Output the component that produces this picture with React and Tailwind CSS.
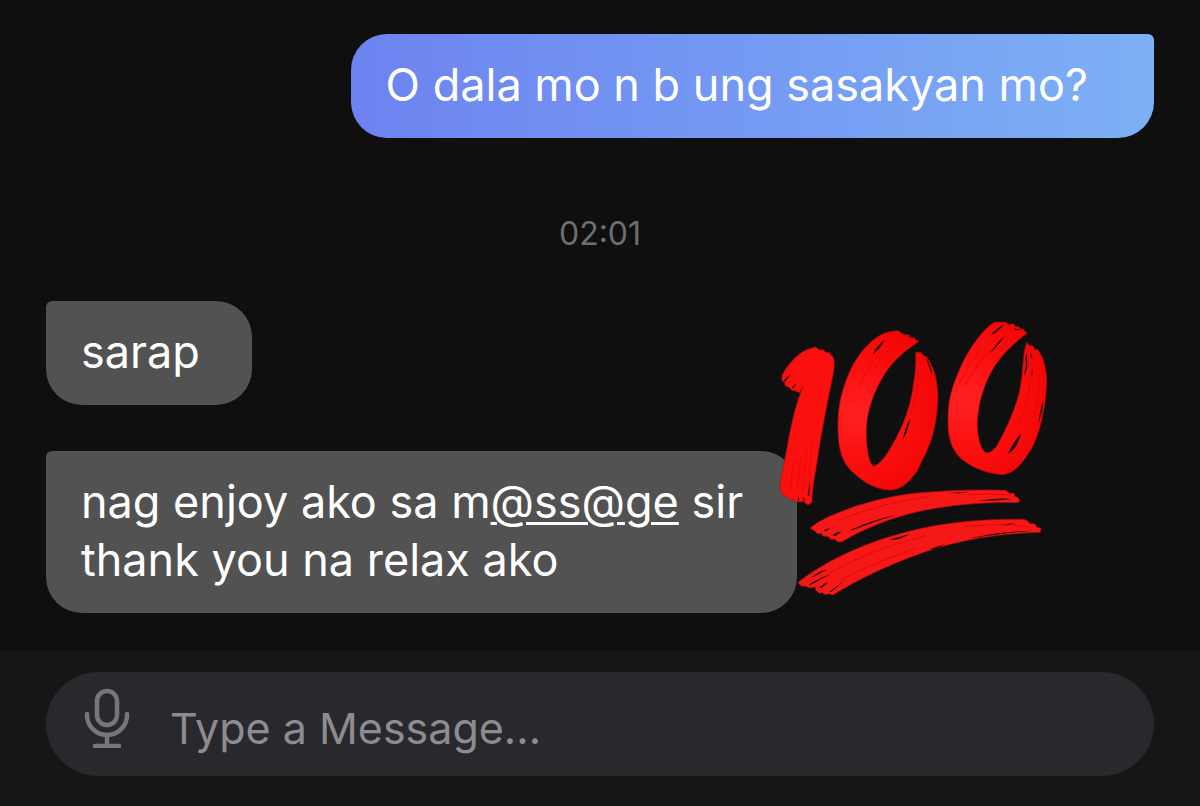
import React, { useState } from "react";

const messages = [
  { id: 1, from: "them", lines: [[{ text: "sarap" }]] },
  {
    id: 2,
    from: "them",
    sticker: true,
    lines: [
      [
        { text: "nag enjoy ako sa m" },
        { text: "@ss@ge", link: true },
        { text: " sir" },
      ],
      [{ text: "thank you na relax ako" }],
    ],
  },
];

const MicIcon = () => (
  <svg
    viewBox="0 0 46 60"
    fill="none"
    stroke="currentColor"
    strokeWidth="4.5"
    strokeLinecap="round"
    className="w-[46px] h-[60px]"
  >
    <rect x="13" y="3" width="20" height="34" rx="10" />
    <path d="M3 26v1a20 20 0 0 0 40 0v-1" />
    <path d="M23 47v11M11 58h24" />
  </svg>
);

// Brushed red "hundred points" sticker
const HundredSticker = () => (
  <svg
    viewBox="60 60 810 831"
    role="img"
    aria-label="Hundred points"
    className="absolute bottom-4 -right-[252px] w-[270px] h-[277px]"
  >
    <defs>
      <radialGradient id="zeroOne" gradientUnits="userSpaceOnUse" cx="290" cy="340" r="270">
        <stop offset="0" stopColor="#ff2222" />
        <stop offset="0.5" stopColor="#fb1010" />
        <stop offset="1" stopColor="#f30606" />
      </radialGradient>
      <radialGradient id="zeroTwo" gradientUnits="userSpaceOnUse" cx="615" cy="300" r="270">
        <stop offset="0" stopColor="#ff2222" />
        <stop offset="0.5" stopColor="#fb1010" />
        <stop offset="1" stopColor="#f30606" />
      </radialGradient>
    </defs>

    <g stroke="#a80d0d" strokeWidth="2" strokeLinejoin="round">
      <path
        fill="#fb1010"
        d="M70 225C85 195 120 155 150 147L170 141L182 150L192 149L201 157L209 157L220 168C228 178 227 200 222 225C205 310 188 390 175 480L162 560L158 608L146 615L134 604L125 606L112 605L103 598L95 599L80 590L65 577L63 552C68 520 78 475 85 440C95 380 108 320 132 258L122 278L108 272L97 270L91 262L78 257L77 248L68 240Z"
      />
      <path
        fill="url(#zeroOne)"
        d="M480 122L471 121L466 113L458 113L448 104L438 105L425 98L420 93L410 92L385 97C345 108 300 155 272 215C245 275 235 330 237 390C238 450 250 490 285 520C315 548 350 568 390 570C425 570 450 548 475 512L490 480L505 452C525 405 537 340 537 285C535 240 525 205 510 182L503 170L495 168L485 157L470 157C472 200 466 250 455 300C440 365 410 420 385 460C370 482 355 498 342 498C330 490 321 440 322 390C324 330 345 275 375 225C400 185 440 150 468 133Z"
      />
      <path
        fill="url(#zeroTwo)"
        d="M805 97L796 96L797 90L785 87L780 80L770 80L763 71L750 74L741 67L708 66C680 80 640 130 610 190C580 255 565 300 567 370C568 420 580 450 605 475C640 505 690 522 730 524C765 522 790 490 815 450C845 400 862 310 863 240C862 200 850 165 835 148L828 149L822 138L812 137L803 127L797 150C790 190 792 230 780 280C765 340 735 400 712 440C700 455 688 460 680 458C665 450 655 410 655 370C657 310 675 255 700 210C725 165 770 125 800 103Z"
      />
      <path
        fill="#f61717"
        d="M153 685L175 668C250 625 380 585 500 577C580 570 660 568 740 571L752 580L765 580L767 589L777 593L783 603L775 608C650 605 520 620 420 650C350 672 290 700 250 725L236 726L228 718L215 718L208 710L192 708L186 700L176 702L165 691Z"
      />
      <path
        fill="#f61717"
        d="M117 848C180 795 290 740 400 708C520 670 660 655 795 658L806 663L813 671L828 672L834 682L846 685L844 697C720 700 600 720 500 755C400 790 300 835 222 885L208 881L200 884L190 878L180 880L168 867L170 861L152 864L138 858L128 859Z"
      />
    </g>

    {/* dry brush gaps */}
    <g fill="#2a0a0a">
      <path d="M74 242Q86 229 96 223Q88 233 77 246Z" />
      <path d="M98 263Q106 254 114 248Q108 256 101 266Z" />
      <path d="M146 585L153 540L151 588Z" />
      <path d="M119 582L121 602L117 601ZM134 588L137 603L133 601Z" />
      <path d="M340 164Q352 138 377 121L360 147Z" />
      <path d="M450 108L464 117L447 109Z" />
      <path d="M500 172Q518 200 520 226L510 201Z" />
      <path d="M431 419Q438 383 454 354Q446 392 438 407Z" />
      <path d="M503 455L516 422L508 452Z" />
      <path d="M694 106Q713 84 738 72L714 96Z" />
      <path d="M690 163Q710 132 738 106Q720 135 690 163Z" />
      <path d="M766 85L786 91L768 90Z" />
      <path d="M799 170L804 160L805 200L797 228L797 215L801 194Z" />
      <path d="M815 155L820 178L814 168ZM820 204L820 224L815 232Z" />
      <path d="M852 300L850 335L838 370Q843 328 852 300Z" />
      <path d="M745 463Q765 424 786 400Q775 448 745 463Z" />
      <path d="M274 690Q340 660 410 645Q345 665 282 690Z" />
      <path d="M194 691Q206 686 216 684L200 694Z" />
      <path d="M220 705Q236 696 248 693L230 709Z" />
      <path d="M568 579L630 575L602 580ZM660 603Q715 593 760 597L720 601Z" />
      <path d="M158 831Q178 815 206 808Q177 824 162 832Z" />
      <path d="M150 853Q185 832 216 822Q183 838 154 856Z" />
      <path d="M180 862Q192 852 208 845L188 865ZM210 877L258 839L220 874Z" />
      <path d="M390 719L455 701L420 718ZM720 674L770 669L745 676Z" />
      <path d="M640 713Q740 692 825 692Q742 697 640 715ZM510 748L560 732L530 747Z" />
    </g>

    {/* darker bristle streaks */}
    <g fill="none" stroke="#e40909" strokeWidth="3" strokeLinecap="round">
      <path d="M105 480L93 570M125 470L116 560M142 450L132 575M160 430L151 520" />
      <path d="M365 160Q320 215 298 260M410 125Q370 165 350 205M478 210Q478 275 455 340" />
      <path d="M690 150Q640 210 620 255M670 140Q625 200 602 250M815 225Q812 300 780 370M840 220Q845 290 825 350" />
      <path d="M240 660Q380 605 510 590M630 585Q690 578 755 585" />
      <path d="M210 820Q340 745 500 708M245 840Q350 785 470 745M620 680Q720 668 810 680" />
    </g>
  </svg>
);

const Bubble = ({ message }) => (
  <div className="relative self-start max-w-[751px] rounded-[36px] rounded-tl-[6px] bg-[#525252] pl-[35px] pr-[52px] pt-[22px] pb-6">
    {message.lines.map((line, i) => (
      <p key={i}>
        {line.map((part, j) =>
          part.link ? (
            <a
              key={j}
              href="#"
              className="underline decoration-[3px] underline-offset-4"
            >
              {part.text}
            </a>
          ) : (
            <React.Fragment key={j}>{part.text}</React.Fragment>
          ),
        )}
      </p>
    ))}
    {message.sticker && (
      <>
        {/* keeps the bubble wide enough for the sticker to hang on its edge */}
        <div className="w-[664px] max-w-full" />
        <HundredSticker />
      </>
    )}
  </div>
);

const App = () => {
  const [draft, setDraft] = useState("");

  return (
    <div className="min-h-screen flex flex-col overflow-hidden bg-[#0f0f0f] font-[Inter,sans-serif] text-[45px] leading-[58px] text-white">
      {/* Conversation */}
      <main className="flex-1 flex flex-col px-[46px] pt-[34px] pb-[38px]">
        <div className="self-end rounded-[36px] rounded-tr-[6px] bg-linear-to-r from-[#6d83f0] to-[#7db0f5] pl-[35px] pr-[66px] pt-[22px] pb-6">
          <p>O dala mo n b ung sasakyan mo?</p>
        </div>

        <time className="self-center mt-[76px] mb-[47px] text-[32px] leading-10 text-[#6e6e6e]">
          02:01
        </time>

        <div className="flex flex-col gap-[46px]">
          {messages.map((message) => (
            <Bubble key={message.id} message={message} />
          ))}
        </div>
      </main>

      {/* Composer */}
      <footer className="bg-[#161616] px-[46px] pt-[21px] pb-[30px]">
        <form
          onSubmit={(e) => e.preventDefault()}
          className="flex items-center h-[104px] rounded-full bg-[#29282d] pl-[38px] pr-10"
        >
          <button
            type="button"
            aria-label="Record voice message"
            className="mb-3 text-[#77767a]"
          >
            <MicIcon />
          </button>
          <input
            type="text"
            aria-label="Message"
            value={draft}
            onChange={(e) => setDraft(e.target.value)}
            placeholder="Type a Message..."
            className="flex-1 min-w-0 ml-10 pt-2 text-[43px] bg-transparent outline-none placeholder:text-[#8d8c91]"
          />
        </form>
      </footer>
    </div>
  );
};

export default App;
